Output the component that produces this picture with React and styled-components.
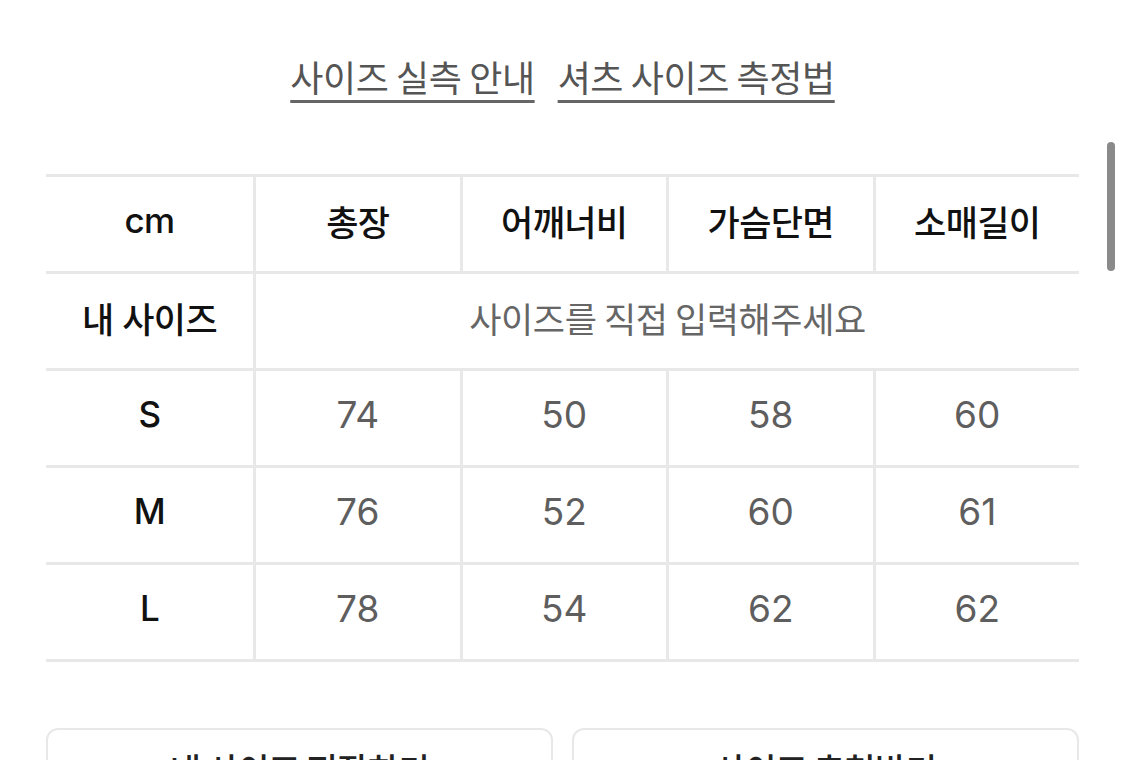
import React from "react";
import styled, { createGlobalStyle } from "styled-components";

const GlobalStyle = createGlobalStyle`
  html, body {
    margin: 0;
    padding: 0;
    overflow: hidden;
    background: #fff;
  }
  body {
    font-family: "Inter", "Noto Sans CJK KR", sans-serif;
    -webkit-font-smoothing: antialiased;
  }
`;

const columns = ["총장", "어깨너비", "가슴단면", "소매길이"];
const sizes = [
  { name: "S", values: [74, 50, 58, 60] },
  { name: "M", values: [76, 52, 60, 61] },
  { name: "L", values: [78, 54, 62, 62] },
];

function App() {
  return (
    <Page>
      <GlobalStyle />
      <LinkRow>
        <GuideLink>사이즈 실측 안내</GuideLink>
        <GuideLink>셔츠 사이즈 측정법</GuideLink>
      </LinkRow>
      <SizeTable>
        <Cell first head>
          cm
        </Cell>
        {columns.map((c) => (
          <Cell key={c} head>
            {c}
          </Cell>
        ))}
        <Cell first head>
          내 사이즈
        </Cell>
        <InputCell>사이즈를 직접 입력해주세요</InputCell>
        {sizes.map((s) => (
          <React.Fragment key={s.name}>
            <Cell first head>
              {s.name}
            </Cell>
            {s.values.map((v, i) => (
              <Cell key={i}>{v}</Cell>
            ))}
          </React.Fragment>
        ))}
      </SizeTable>
      <CardRow>
        <Card>내 사이즈 저장하기</Card>
        <Card>사이즈 추천받기</Card>
      </CardRow>
      <ScrollThumb />
    </Page>
  );
}

const Page = styled.div`
  position: relative;
  height: 760px;
  padding: 0 46px;
  box-sizing: border-box;
`;

const LinkRow = styled.div`
  display: flex;
  justify-content: center;
  gap: 23px;
  padding-top: 50px;
  height: 174px;
  box-sizing: border-box;
`;

const GuideLink = styled.a`
  font-family: "Noto Sans CJK KR", sans-serif;
  font-size: 36px;
  line-height: 52px;
  letter-spacing: -0.4px;
  color: #555;
  text-decoration: underline;
  text-decoration-thickness: 3px;
  text-underline-offset: 8px;
  text-decoration-color: #666;
`;

const SizeTable = styled.div`
  display: grid;
  grid-template-columns: 207px repeat(4, 1fr);
  grid-auto-rows: 97px;
  border-top: 3px solid #e8e8e8;
`;

const Cell = styled.div`
  display: flex;
  align-items: center;
  justify-content: center;
  padding-bottom: 8px;
  box-sizing: border-box;
  border-bottom: 3px solid #e8e8e8;
  border-left: ${(p) => (p.first ? "none" : "3px solid #e8e8e8")};
  font-family: "Inter", "Noto Sans CJK KR", sans-serif;
  font-size: ${(p) => (p.head ? "35px" : "37px")};
  font-weight: ${(p) => (p.head ? 500 : 400)};
  letter-spacing: ${(p) => (p.head ? "-0.6px" : "0")};
  color: ${(p) => (p.head ? "#111" : "#5e5e5e")};
`;

const InputCell = styled(Cell)`
  grid-column: span 4;
  font-family: "Noto Sans CJK KR", sans-serif;
  font-size: 35px;
  font-weight: 400;
  letter-spacing: -0.4px;
  color: #666;
`;

const CardRow = styled.div`
  display: grid;
  grid-template-columns: 1fr 1fr;
  gap: 19px;
  margin-top: 66px;
`;

const Card = styled.div`
  height: 120px;
  border: 2px solid #e8e8e8;
  border-radius: 12px;
  display: flex;
  justify-content: center;
  padding-top: 14px;
  box-sizing: border-box;
  font-family: "Noto Sans CJK KR", sans-serif;
  font-size: 34px;
  font-weight: 500;
  letter-spacing: -0.6px;
  color: #222;
`;

const ScrollThumb = styled.div`
  position: absolute;
  top: 142px;
  right: 10px;
  width: 8px;
  height: 129px;
  border-radius: 4px;
  background: #8a8a8a;
`;

export default App;
